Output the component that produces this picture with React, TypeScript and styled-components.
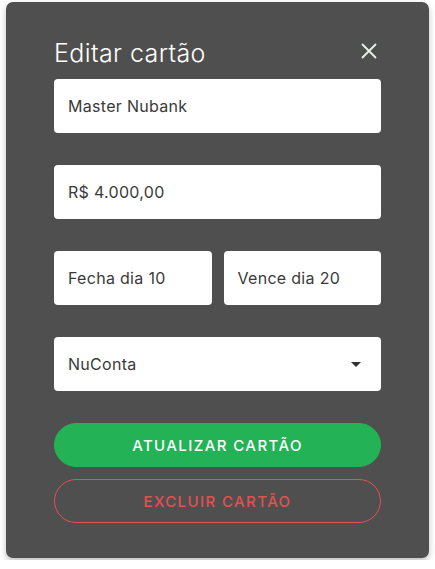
import React from 'react';
import styled, { createGlobalStyle } from 'styled-components';

const GlobalStyle = createGlobalStyle`
    body {
        margin: 0;
        background: #ffffff;
        font-family: Inter, 'Noto Sans', sans-serif;
    }
`;

const Modal = styled.section`
    box-sizing: border-box;
    width: 423px;
    margin: 2px 6px;
    padding: 34px 48px 35px 48px;
    background: #4f4f4f;
    border-radius: 7px;
    box-shadow: 0 3px 6px rgba(0, 0, 0, 0.25);
    display: flex;
    flex-direction: column;
`;

const Header = styled.header`
    display: flex;
    align-items: center;
    justify-content: space-between;
    height: 34px;
    margin-bottom: 9px;
`;

const Title = styled.h2`
    margin: 0;
    color: #ffffff;
    font-size: 25px;
    font-weight: 300;
    letter-spacing: 0.4px;
`;

const CloseButton = styled.button`
    border: none;
    background: none;
    padding: 0;
    margin: 0 4px 4px 0;
    display: flex;
    cursor: pointer;
`;

const Form = styled.form`
    display: flex;
    flex-direction: column;
    gap: 32px;
`;

const Row = styled.div`
    display: flex;
    gap: 12px;

    > * {
        flex: 1;
    }
`;

const Field = styled.div`
    height: 54px;
    box-sizing: border-box;
    background: #ffffff;
    border-radius: 4px;
    padding: 0 14px;
    display: flex;
    align-items: center;
    justify-content: space-between;
    color: #3a3a3a;
    font-size: 16px;
    letter-spacing: 0.3px;
`;

const Caret = styled.span`
    width: 0;
    height: 0;
    margin-right: 6px;
    border-left: 5px solid transparent;
    border-right: 5px solid transparent;
    border-top: 5px solid #333333;
`;

const Actions = styled.div`
    display: flex;
    flex-direction: column;
    gap: 12px;
    margin-top: 32px;
`;

const Button = styled.button<{ $variant: 'primary' | 'danger' }>`
    height: 44px;
    border-radius: 22px;
    font-family: inherit;
    font-size: 15px;
    font-weight: 500;
    letter-spacing: 1.4px;
    text-transform: uppercase;
    cursor: pointer;
    background: ${(p) => (p.$variant === 'primary' ? '#23b255' : 'transparent')};
    color: ${(p) => (p.$variant === 'primary' ? '#ffffff' : '#e55050')};
    border: 1px solid ${(p) => (p.$variant === 'primary' ? '#23b255' : '#e55050')};
`;

const App = () => {
    return (
        <>
            <GlobalStyle />
            <Modal>
                <Header>
                    <Title>Editar cartão</Title>
                    <CloseButton aria-label="Fechar">
                        <svg width="16" height="16" viewBox="0 0 16 16">
                            <path
                                d="M1.5 1.5 L14.5 14.5 M14.5 1.5 L1.5 14.5"
                                stroke="#e8f2e8"
                                strokeWidth="1.8"
                                strokeLinecap="round"
                            />
                        </svg>
                    </CloseButton>
                </Header>
                <Form>
                    <Field>Master Nubank</Field>
                    <Field>R$ 4.000,00</Field>
                    <Row>
                        <Field>Fecha dia 10</Field>
                        <Field>Vence dia 20</Field>
                    </Row>
                    <Field>
                        <span>NuConta</span>
                        <Caret />
                    </Field>
                </Form>
                <Actions>
                    <Button $variant="primary">Atualizar cartão</Button>
                    <Button $variant="danger">Excluir cartão</Button>
                </Actions>
            </Modal>
        </>
    );
};

export default App;
